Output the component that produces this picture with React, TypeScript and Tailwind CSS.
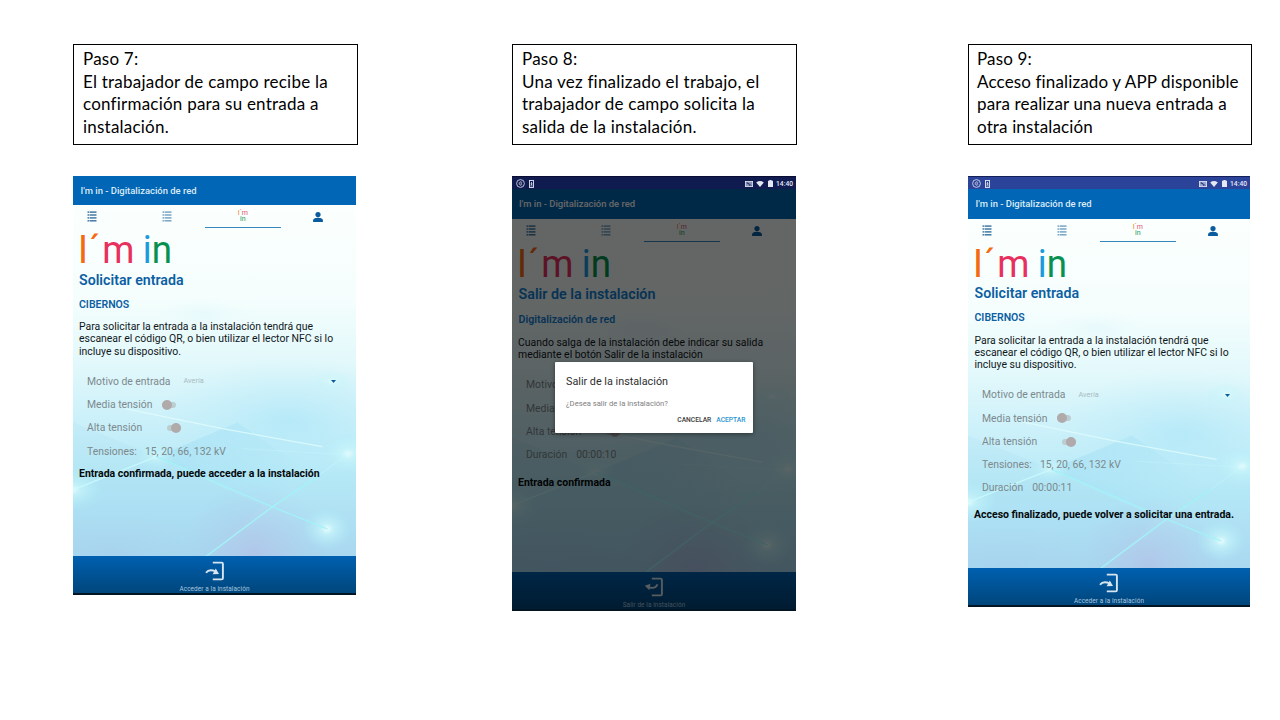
import type { ReactNode } from "react";
import clsx from "clsx";

function Caption({ lines, narrow }: { lines: ReactNode[]; narrow?: boolean }) {
  return (
    <div
      className={clsx(
        "h-[101px] whitespace-nowrap border border-black bg-white pt-[3px] font-['Lato','Liberation_Sans',sans-serif] text-[17px] leading-[22.7px] text-black",
        narrow ? "w-[284px] pl-[8px] tracking-[0.14px]" : "w-[285px] pl-[9px] tracking-[0.22px]",
      )}
    >
      {lines.map((l, i) => (
        <p key={i}>{l}</p>
      ))}
    </div>
  );
}

function Backdrop({ id }: { id: string }) {
  return (
    <svg className="absolute inset-0 h-full w-full" viewBox="0 0 284 350" preserveAspectRatio="none" aria-hidden="true">
      <defs>
        <linearGradient id={`${id}-sky`} x1="0" y1="0" x2="0" y2="1">
          <stop offset="0" stopColor="#fbfffd" />
          <stop offset="0.26" stopColor="#f5fefd" />
          <stop offset="0.45" stopColor="#e2f8fb" />
          <stop offset="0.6" stopColor="#cdf1fa" />
          <stop offset="0.78" stopColor="#b4e8f6" />
          <stop offset="1" stopColor="#a9d8f0" />
        </linearGradient>
        <linearGradient id={`${id}-facet`} x1="0" y1="0" x2="1" y2="0.3">
          <stop offset="0" stopColor="#98daf3" stopOpacity="0.5" />
          <stop offset="1" stopColor="#98daf3" stopOpacity="0" />
        </linearGradient>
        <radialGradient id={`${id}-glow`}>
          <stop offset="0" stopColor="#f0ffff" />
          <stop offset="0.25" stopColor="#d0fafc" stopOpacity="0.65" />
          <stop offset="1" stopColor="#b0f2fa" stopOpacity="0" />
        </radialGradient>
        <radialGradient id={`${id}-violet`}>
          <stop offset="0" stopColor="#b3bfe6" stopOpacity="0.7" />
          <stop offset="1" stopColor="#b3c8ea" stopOpacity="0" />
        </radialGradient>
        <radialGradient id={`${id}-cyan`}>
          <stop offset="0" stopColor="#a9e4f7" stopOpacity="0.6" />
          <stop offset="1" stopColor="#b8ecf8" stopOpacity="0" />
        </radialGradient>
      </defs>
      <rect width="284" height="350" fill={`url(#${id}-sky)`} />
      <ellipse cx="215" cy="215" rx="130" ry="65" fill={`url(#${id}-cyan)`} />
      <ellipse cx="130" cy="108" rx="45" ry="15" fill={`url(#${id}-cyan)`} opacity="0.2" />
      <ellipse cx="182" cy="348" rx="75" ry="70" fill={`url(#${id}-violet)`} />
      <ellipse cx="40" cy="345" rx="90" ry="38" fill={`url(#${id}-violet)`} opacity="0.3" />
      <path d="M0 217 L84 251 L0 284 Z" fill="#a8def2" opacity="0.2" />
      <path d="M0 284 L84 251 L190 300 L134 350 L0 350 Z" fill="#9ed7f0" opacity="0.2" />
      <path d="M84 251 L165 217 L245 271 L200 301 Z" fill={`url(#${id}-facet)`} />
      <ellipse cx="276" cy="248" rx="26" ry="20" fill={`url(#${id}-glow)`} opacity="0.8" />
      <ellipse cx="255" cy="323" rx="25" ry="21" fill={`url(#${id}-glow)`} opacity="0.95" />
      <ellipse cx="0" cy="284" rx="30" ry="22" fill={`url(#${id}-glow)`} opacity="0.85" />
      <ellipse cx="84" cy="251" rx="22" ry="13" fill={`url(#${id}-glow)`} opacity="0.7" />
      <ellipse cx="260" cy="176" rx="20" ry="11" fill={`url(#${id}-glow)`} opacity="0.6" />
      <g fill="none" stroke="#c9fafd" strokeLinecap="round">
        <path d="M0 284 L84 251" strokeWidth="1.3" opacity="0.85" />
        <path d="M84 251 L200 301 L255 323" stroke="#a2f2f7" strokeWidth="1.5" opacity="0.9" />
        <path d="M134 350 L200 301 L245 271" stroke="#a2f2f7" strokeWidth="1.5" opacity="0.95" />
        <path d="M245 271 L276 248" strokeWidth="1" opacity="0.4" />
        <path d="M52 203 L150 223 L250 241" stroke="#e2fdfe" strokeWidth="1.2" opacity="0.75" />
        <path d="M170 243 L276 249" strokeWidth="0.9" opacity="0.4" />
      </g>
    </svg>
  );
}

function ListIcon({ light }: { light?: boolean }) {
  return (
    <svg className={clsx("h-[11px] w-[10px]", light ? "text-[#6f9fc2]" : "text-[#37719f]")} viewBox="0 0 10 11" fill="currentColor">
      {[0.4, 3.3, 6.2, 9.1].map((y) => (
        <g key={y}>
          <rect x="0.5" y={y} width="1.9" height="1.4" />
          <rect x="2.9" y={y} width="6.6" height="1.4" />
        </g>
      ))}
    </svg>
  );
}

function UserIcon() {
  return (
    <svg className="h-[10px] w-[10px] text-[#0b5c9f]" viewBox="0 0 10 10" fill="currentColor">
      <circle cx="5" cy="2.6" r="2.6" />
      <path d="M0.1 10V8.3C0.1 6.5 3.2 5.8 5 5.8s4.9 0.7 4.9 2.5V10Z" />
    </svg>
  );
}

function Tabs() {
  return (
    <div className="-ml-[19px] flex h-[23px] w-[378px] shrink-0">
      <div className="flex w-[75.5px] items-center justify-center"><ListIcon /></div>
      <div className="flex w-[75.5px] items-center justify-center"><ListIcon light /></div>
      <div className="flex w-[75.5px] flex-col items-center justify-center border-b border-[#3587bd] text-[7px] leading-[6px]">
        <span><span className="text-[#ef7a2d]">I´</span><span className="text-[#dd5277]">m</span></span>
        <span className="text-[#159558]">in</span>
      </div>
      <div className="flex w-[75.5px] items-center justify-center"><UserIcon /></div>
    </div>
  );
}

function Logo() {
  return (
    <div className="flex origin-left scale-x-[0.94] items-center pl-[2px] pt-px text-[39px] leading-[42px]">
      <span className="text-[#f5690f]">I</span>
      <span className="ml-[1px] text-[#f5690f]">´</span>
      <span className="ml-[2px] text-[#e8305f]">m</span>
      <span className="ml-[9px] text-[#1a9cdc]">i</span>
      <span className="text-[#079150]">n</span>
    </div>
  );
}

function Row({ label, children }: { label: string; children?: ReactNode }) {
  return (
    <div className="flex h-[23.3px] items-center pl-[14px] text-[10.4px] text-[#7d898d]">
      <span>{label}</span>
      {children}
    </div>
  );
}

function Toggle({ on }: { on?: boolean }) {
  return (
    <span className={clsx("flex h-[6px] w-[14px] items-center rounded-full bg-[#bccdd2]", on ? "justify-end" : "justify-start")}>
      <span className="size-[10px] shrink-0 rounded-full bg-[#b1aaaa]" />
    </span>
  );
}

function DoorIcon({ out }: { out?: boolean }) {
  return (
    <svg className="h-[20px] w-[20px]" viewBox="0 0 20 20" fill="none" stroke="currentColor">
      <path d="M7.8 1.6h8.9q1.2 0 1.2 1.2v14.4q0 1.2-1.2 1.2H7.8" strokeWidth="1.9" />
      {out ? (
        <>
          <path d="M13.4 7.4Q11.6 12.2 5 10.4" strokeWidth="1.9" />
          <path d="M0.8 8.8L6.4 6.8L5.4 13.2Z" fill="currentColor" stroke="none" />
        </>
      ) : (
        <>
          <path d="M1 11.8Q4 7.6 10.6 10.4" strokeWidth="1.9" />
          <path d="M14 12.9L7.6 13.2L10.8 7.4Z" fill="currentColor" stroke="none" />
        </>
      )}
    </svg>
  );
}

function StatusBar({ dim }: { dim?: boolean }) {
  return (
    <div className={clsx("flex h-[13px] shrink-0 items-center border-t pl-[4px] pr-[3px] pt-[1px] text-[#e4e8f5]", dim ? "border-[#090d33] bg-[#101b50]" : "border-[#15205a] bg-[#2b4399]")}>
      <svg className="h-[9px] w-[9px]" viewBox="0 0 9 9" fill="none" stroke="currentColor" strokeWidth="0.8">
        <circle cx="4.5" cy="4.5" r="3.9" />
        <path d="M5.3 2.2L2.8 4.5L5.3 6.8M6.2 3.3L4.8 4.5L6.2 5.7" />
      </svg>
      <svg className="ml-[4px] h-[8px] w-[5px]" viewBox="0 0 5 8" fill="none" stroke="currentColor" strokeWidth="0.9">
        <rect x="0.5" y="0.5" width="4" height="7" />
        <path d="M2.5 2v2.6M1.4 3.6L2.5 4.8L3.6 3.6M1.4 5.9h2.2" strokeWidth="0.8" />
      </svg>
      <svg className="ml-auto h-[6px] w-[8px]" viewBox="0 0 8 6" fill="none" stroke="currentColor">
        <rect x="0.4" y="0.4" width="7.2" height="5.2" fill="currentColor" fillOpacity="0.6" strokeWidth="0.8" />
        <path d="M1.5 2Q4.5 2 4.8 5M2 1.5L6.5 4.6" stroke="#1b2a6b" strokeWidth="0.7" />
      </svg>
      <svg className="ml-[3px] h-[6px] w-[8px]" viewBox="0 0 8 6" fill="currentColor">
        <path d="M0.2 1.4Q4 -1.2 7.8 1.4L4 6Z" />
      </svg>
      <svg className="ml-[4px] h-[7px] w-[5px]" viewBox="0 0 5 7" fill="currentColor">
        <path d="M0 0.8h1.4V0h2.2v0.8H5v6.2H0Z" />
      </svg>
      <span className="ml-[3px] text-[6.7px] font-medium leading-[8px]">14:40</span>
    </div>
  );
}

function Confirm() {
  return (
    <div className="absolute left-[43px] top-[173px] flex h-[71px] w-[197.5px] flex-col rounded-[1px] bg-white px-[11px] shadow-[0_1px_4px_rgba(0,0,0,0.45)]">
      <p className="mt-[13px] text-[10.8px] leading-[14px] text-[#2e2e2e]">Salir de la instalación</p>
      <p className="mt-[9px] text-[7.65px] leading-[12px] text-[#808080]">¿Desea salir de la instalación?</p>
      <div className="-mr-[4px] mt-[5px] flex justify-end gap-[5px] text-[6.7px] font-medium leading-[10px]">
        <span className="text-[#3a3a3a]">CANCELAR</span>
        <span className="text-[#2a94cf]">ACEPTAR</span>
      </div>
    </div>
  );
}

type PhoneProps = {
  id: string;
  size: string;
  status?: boolean;
  dim?: boolean;
  title: string;
  subtitle: string;
  text: string[];
  message: ReactNode;
  children: ReactNode;
};

function Phone({ id, size, status, dim, title, subtitle, text, message, children }: PhoneProps) {
  const heading = dim ? "text-[#1280d4]" : "text-[#0d5fa3]";
  return (
    <div className={clsx("flex flex-col overflow-hidden whitespace-nowrap bg-[#031523] pb-[2px] font-['Roboto','Liberation_Sans',sans-serif]", size)}>
      {status && <StatusBar dim={dim} />}
      <div className="relative flex min-h-0 grow flex-col">
        <div className={clsx("flex shrink-0 items-center bg-[#0066b5] pt-px text-[9.45px] font-medium", status ? "h-[30px]" : "h-[29px]", dim ? "pl-[7px] text-white" : "pl-[7.5px] text-[#dceaf5]")}>
          I'm in - Digitalización de red
        </div>
        <div className="relative min-h-0 grow overflow-hidden">
          <Backdrop id={id} />
          <div className="relative">
            <Tabs />
            <div className={clsx(status ? "pl-[6.5px]" : "pl-[6px]")}>
              <div className={clsx("-ml-[3.5px]", status ? "h-[42px]" : "h-[42.5px]")}><Logo /></div>
              <h2 className={clsx("flex items-center font-semibold", heading, dim ? "h-[21px] text-[14.3px]" : "h-[20px] text-[14.2px]")}>{title}</h2>
              <h3 className={clsx("flex items-center font-semibold", heading, dim ? "h-[29px] text-[10.6px]" : "h-[28px] text-[10.5px]")}>{subtitle}</h3>
            </div>
            <div className={clsx("pt-[2.5px] text-[10.45px] leading-[12.3px] text-[#10181b]", status && !dim ? "pl-[6.5px]" : "pl-[6px]", dim ? "pb-[12.5px]" : "pb-[12px]")}>
              {text.map((t) => (
                <p key={t}>{t}</p>
              ))}
            </div>
            {children}
            {message}
          </div>
        </div>
        <div className="flex h-[37px] shrink-0 flex-col items-center bg-linear-to-b from-[#0060b0] to-[#00467c] pt-[5px] text-[#d7e5ef]">
          <DoorIcon out={dim} />
          <span className="mt-[4px] text-[6.4px] leading-[8px] tracking-[0.1px] text-[#a9c6de]">
            {dim ? "Salir de la instalación" : "Acceder a la instalación"}
          </span>
        </div>
        {dim && <div className="absolute inset-0 bg-black/60" />}
        {dim && <Confirm />}
      </div>
    </div>
  );
}

function MotiveRow() {
  return (
    <Row label="Motivo de entrada">
      <span className="ml-[13px] text-[7.3px] text-[#a9bbc0]">Avería</span>
      <svg className="ml-auto mr-[20px] h-[3px] w-[5px]" viewBox="0 0 5 3" fill="#0b5c9f"><path d="M0 0h5L2.5 3Z" /></svg>
    </Row>
  );
}

const requestText = [
  "Para solicitar la entrada a la instalación tendrá que",
  "escanear el código QR, o bien utilizar el lector NFC si lo",
  "incluye su dispositivo.",
];

const messageStyle = "flex items-center pl-[6px] text-[10.5px] font-bold text-[#05090b]";

export default function App() {
  return (
    <main className="flex h-[720px] w-[1280px] items-start overflow-hidden bg-white pl-[73px] pt-[44px]">
      <section className="flex w-[439px] flex-col gap-[31px]">
        <Caption
          lines={[
            "Paso 7:",
            "El trabajador de campo recibe la",
            "confirmación para su entrada a",
            "instalación.",
          ]}
        />
        <Phone
          id="p7"
          size="h-[419px] w-[283px]"
          title="Solicitar entrada"
          subtitle="CIBERNOS"
          text={requestText}
          message={<p className={clsx(messageStyle, "h-[22px]")}>Entrada confirmada, puede acceder a la instalación</p>}
        >
          <MotiveRow />
          <Row label="Media tensión"><span className="ml-[10px]"><Toggle /></span></Row>
          <Row label="Alta tensión"><span className="ml-[25px]"><Toggle on /></span></Row>
          <Row label="Tensiones:"><span className="ml-[8px]">15, 20, 66, 132 kV</span></Row>
        </Phone>
      </section>

      <section className="flex w-[456px] flex-col gap-[31px]">
        <Caption
          lines={[
            "Paso 8:",
            "Una vez finalizado el trabajo, el",
            "trabajador de campo solicita la",
            "salida de la instalación.",
          ]}
        />
        <Phone
          id="p8"
          size="h-[435px] w-[284px]"
          status
          dim
          title="Salir de la instalación"
          subtitle="Digitalización de red"
          text={["Cuando salga de la instalación debe indicar su salida", "mediante el botón Salir de la instalación"]}
          message={<p className={clsx(messageStyle, "h-[32px]")}>Entrada confirmada</p>}
        >
          <Row label="Motivo" />
          <Row label="Media" />
          <Row label="Alta tensión"><span className="ml-[25px]"><Toggle on /></span></Row>
          <Row label="Duración"><span className="ml-[9px]">00:00:10</span></Row>
        </Phone>
      </section>

      <section className="flex w-[284px] flex-col gap-[31px]">
        <Caption
          narrow
          lines={[
            "Paso 9:",
            "Acceso finalizado y APP disponible",
            "para realizar una nueva entrada a",
            "otra instalación",
          ]}
        />
        <Phone
          id="p9"
          size="h-[431px] w-[282px]"
          status
          title="Solicitar entrada"
          subtitle="CIBERNOS"
          text={requestText}
          message={<p className={clsx(messageStyle, "h-[30px]")}>Acceso finalizado, puede volver a solicitar una entrada.</p>}
        >
          <MotiveRow />
          <Row label="Media tensión"><span className="ml-[10px]"><Toggle /></span></Row>
          <Row label="Alta tensión"><span className="ml-[25px]"><Toggle on /></span></Row>
          <Row label="Tensiones:"><span className="ml-[8px]">15, 20, 66, 132 kV</span></Row>
          <Row label="Duración"><span className="ml-[9px]">00:00:11</span></Row>
        </Phone>
      </section>
    </main>
  );
}
